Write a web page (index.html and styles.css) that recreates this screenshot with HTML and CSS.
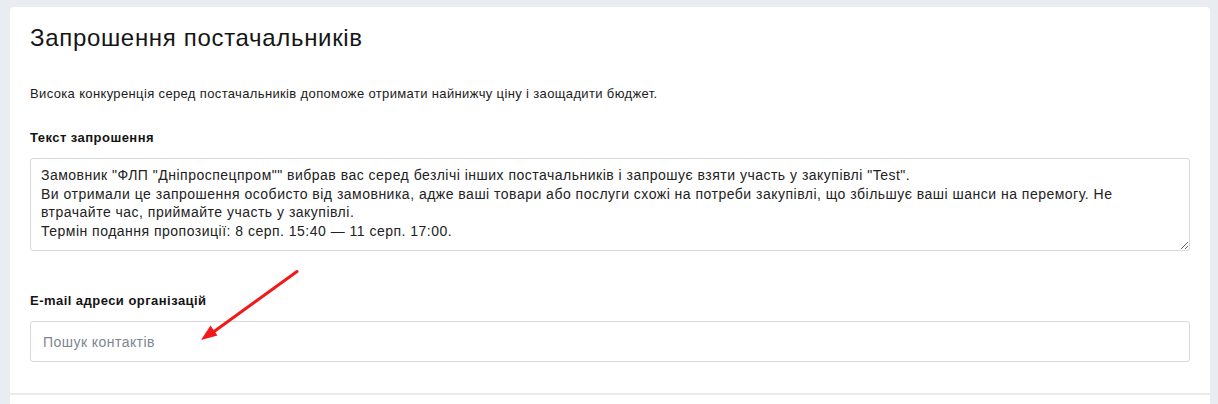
FILE: index.html
```html
<!DOCTYPE html>
<html lang="uk">
<head>
<meta charset="utf-8">
<title>Запрошення постачальників</title>
<link rel="stylesheet" href="styles.css">
</head>
<body>
<div class="page">
  <div class="card">
    <section class="section">
      <h1 class="title">Запрошення постачальників</h1>
      <p class="desc">Висока конкуренція серед постачальників допоможе отримати найнижчу ціну і заощадити бюджет.</p>
      <label class="label label-text">Текст запрошення</label>
      <textarea class="textarea">Замовник "ФЛП "Дніпроспецпром"" вибрав вас серед безлічі інших постачальників і запрошує взяти участь у закупівлі "Test".
Ви отримали це запрошення особисто від замовника, адже ваші товари або послуги схожі на потреби закупівлі, що збільшує ваші шанси на перемогу. Не втрачайте час, приймайте участь у закупівлі.
Термін подання пропозиції: 8 серп. 15:40 — 11 серп. 17:00.</textarea>
      <label class="label label-email">E-mail адреси організацій</label>
      <input class="input" type="text" placeholder="Пошук контактів">
      <svg class="arrow" width="120" height="90" viewBox="190 260 120 90" aria-hidden="true">
        <line x1="297" y1="271.5" x2="212" y2="333" stroke="#f2191b" stroke-width="3" stroke-linecap="round"/>
        <polygon points="201,340 210.5,325.5 217.5,335.5" fill="#f2191b"/>
      </svg>
    </section>
    <div class="section-next"></div>
  </div>
</div>
</body>
</html>
```

FILE: styles.css
```css
* { box-sizing: border-box; }
html, body { margin: 0; padding: 0; }
body {
  background: #e9ecf1;
  font-family: "Liberation Sans", Arial, sans-serif;
  color: #1b1b1b;
  height: 404px;
  overflow: hidden;
}
.page {
  padding: 7px 8px 0 10px;
}
.card {
  background: #ffffff;
  border-radius: 4px 4px 0 0;
  height: 397px;
  display: flex;
  flex-direction: column;
}
.section {
  position: relative;
  padding: 17px 20px 31px 20px;
  border-bottom: 2px solid #ebebeb;
  display: flex;
  flex-direction: column;
}
.title {
  margin: 0;
  font-size: 24px;
  line-height: 28px;
  font-weight: 400;
  letter-spacing: 0.68px;
  color: #161616;
}
.desc {
  margin: 34px 0 0 0;
  font-size: 13px;
  line-height: 16px;
  letter-spacing: 0.36px;
  color: #1b1b1b;
}
.label {
  display: block;
  font-size: 13px;
  line-height: 16px;
  font-weight: 700;
  letter-spacing: 0.46px;
  color: #141414;
}
.label-text { margin-top: 28px; }
.label-email { margin-top: 42px; }
.textarea {
  margin-top: 12px;
  width: 100%;
  height: 93px;
  padding: 7px 10px;
  border: 1px solid #d5d8de;
  border-radius: 3px;
  font-family: "Liberation Sans", Arial, sans-serif;
  font-size: 14px;
  line-height: 18.7px;
  letter-spacing: 0.49px;
  color: #222222;
  resize: vertical;
  display: block;
  outline: none;
}
.input {
  margin-top: 12px;
  width: 100%;
  height: 41px;
  padding: 0 12px;
  border: 1px solid #d5d8de;
  border-radius: 3px;
  font-family: "Liberation Sans", Arial, sans-serif;
  font-size: 14px;
  letter-spacing: 0.45px;
  color: #222222;
  outline: none;
  display: block;
}
.input::placeholder { color: #7d8591; opacity: 1; }
.arrow {
  position: absolute;
  left: 180px;
  top: 253px;
  overflow: visible;
}
.section-next { flex: 1; }
```
